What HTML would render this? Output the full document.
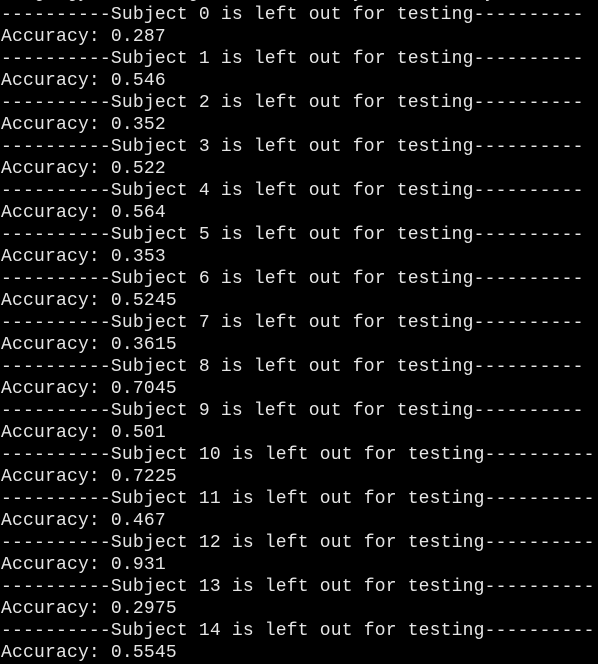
<!DOCTYPE html>
<html><head><style>
html,body{margin:0;padding:0;background:#000;width:598px;height:664px;overflow:hidden}
pre{position:absolute;left:1px;top:-18px;margin:0;font-family:"Liberation Mono",monospace;font-size:18px;letter-spacing:0.19px;line-height:22px;color:#e6e6e6}
</style></head><body><pre>  og  gy         g              y     _     y
----------Subject 0 is left out for testing----------
Accuracy: 0.287
----------Subject 1 is left out for testing----------
Accuracy: 0.546
----------Subject 2 is left out for testing----------
Accuracy: 0.352
----------Subject 3 is left out for testing----------
Accuracy: 0.522
----------Subject 4 is left out for testing----------
Accuracy: 0.564
----------Subject 5 is left out for testing----------
Accuracy: 0.353
----------Subject 6 is left out for testing----------
Accuracy: 0.5245
----------Subject 7 is left out for testing----------
Accuracy: 0.3615
----------Subject 8 is left out for testing----------
Accuracy: 0.7045
----------Subject 9 is left out for testing----------
Accuracy: 0.501
----------Subject 10 is left out for testing----------
Accuracy: 0.7225
----------Subject 11 is left out for testing----------
Accuracy: 0.467
----------Subject 12 is left out for testing----------
Accuracy: 0.931
----------Subject 13 is left out for testing----------
Accuracy: 0.2975
----------Subject 14 is left out for testing----------
Accuracy: 0.5545</pre></body></html>
